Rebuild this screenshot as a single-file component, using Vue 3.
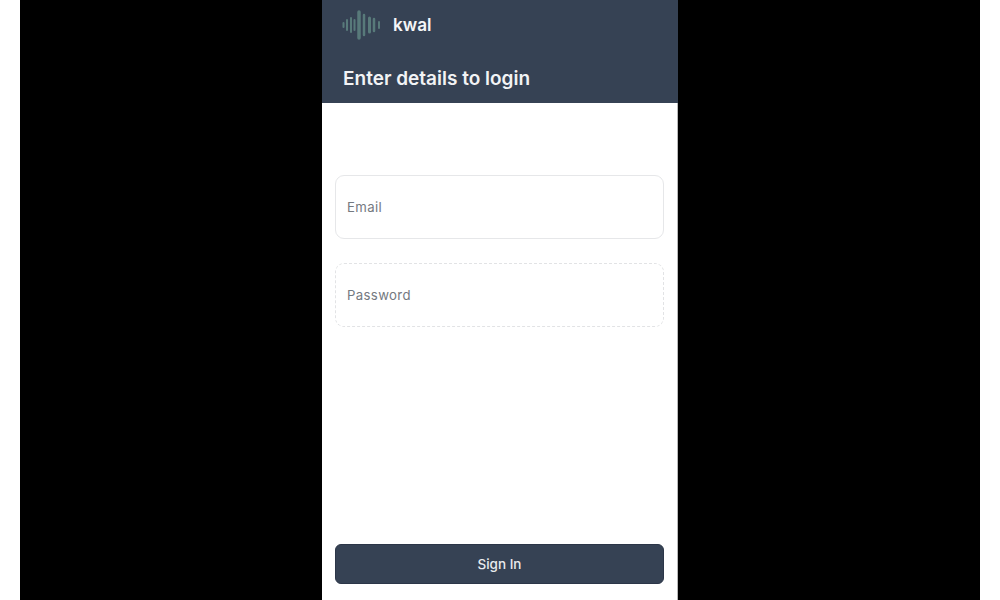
<template>
  <div class="stage">
    <div class="phone">
      <header class="head">
        <div class="brand">
          <svg class="logo" width="38" height="30" viewBox="0 0 38 30" fill="none" stroke="#587a7a" stroke-linecap="round">
            <line
              v-for="bar in bars"
              :key="bar.x"
              :x1="bar.x"
              :x2="bar.x"
              :y1="15 - bar.h"
              :y2="15 + bar.h"
              :stroke-width="bar.w"
            />
          </svg>
          <span class="name">kwal</span>
        </div>
        <h1>Enter details to login</h1>
      </header>

      <form class="form" @submit.prevent>
        <div class="fields">
          <input class="field" type="text" placeholder="Email" />
          <input class="field dashed" type="password" placeholder="Password" />
        </div>
        <button class="signin" type="submit">Sign In</button>
      </form>
    </div>
  </div>
</template>

<script setup>
// waveform bars of the logo, left to right
const bars = [
  { x: 1.5, h: 2, w: 2 },
  { x: 5, h: 5, w: 2 },
  { x: 9, h: 7, w: 2 },
  { x: 12.5, h: 5, w: 2 },
  { x: 17, h: 13, w: 3.5 },
  { x: 22, h: 10, w: 2.5 },
  { x: 27.5, h: 7, w: 3 },
  { x: 32, h: 6, w: 2.5 },
  { x: 37, h: 3, w: 2 }
]
</script>

<style>
html, body {
  margin: 0;
  background: #fff;
}
</style>

<style scoped>
.stage {
  height: 600px;
  margin: 0 20px;
  background: #000;
  display: flex;
  justify-content: center;
  overflow: hidden;
  font-family: Inter, "Liberation Sans", sans-serif;
}
.phone {
  width: 356px;
  background: #fff;
  display: flex;
  flex-direction: column;
}
.head {
  height: 103px;
  box-sizing: border-box;
  background: #364254;
  padding: 10px 21px 0 20px;
}
.brand {
  display: flex;
  align-items: center;
  gap: 13px;
  height: 30px;
}
.name {
  color: #f4f5f7;
  font-size: 17.2px;
  line-height: 30px;
  font-weight: 600;
}
h1 {
  margin: 26px 0 0 1px;
  color: #f2f3f5;
  font-size: 19px;
  line-height: 26px;
  font-weight: 600;
}
.form {
  flex: 1;
  display: flex;
  flex-direction: column;
  justify-content: space-between;
  padding: 72px 13px 16px 13px;
  border-right: 1px solid #b9b9b9;
}
.fields {
  display: flex;
  flex-direction: column;
  gap: 24px;
}
.field {
  height: 64px;
  box-sizing: border-box;
  padding: 0 11px;
  border: 1px solid #e6e7e9;
  border-radius: 9px;
  outline: none;
  font-family: inherit;
  font-size: 13.2px;
  letter-spacing: 0.35px;
  color: #333;
}
.field.dashed {
  border-style: dashed;
  border-color: #e2e3e5;
}
.field::placeholder {
  color: #74797f;
  opacity: 1;
}
.signin {
  height: 40px;
  border: 1px solid #2c3648;
  border-radius: 6px;
  background: #364254;
  color: #e9ebee;
  font-family: inherit;
  font-size: 13.5px;
  font-weight: 500;
}
</style>
